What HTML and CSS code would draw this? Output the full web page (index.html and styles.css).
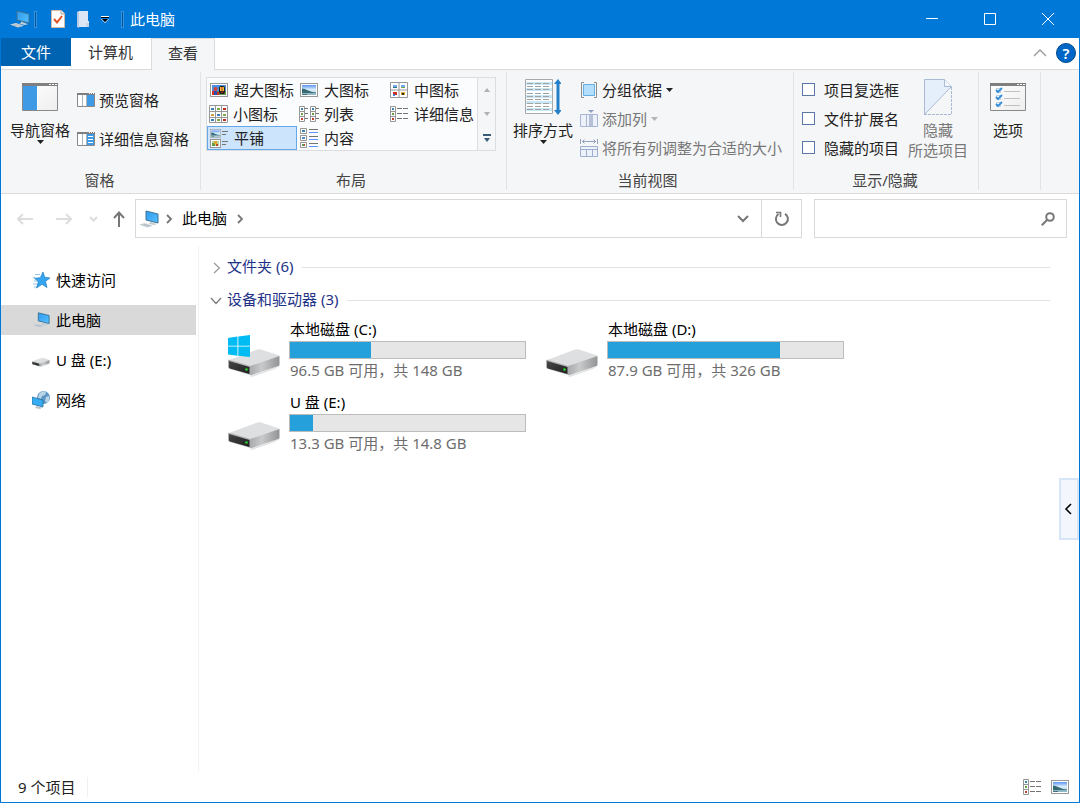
FILE: index.html
```html
<!DOCTYPE html>
<html lang="zh-CN">
<head>
<meta charset="utf-8">
<title>此电脑</title>
<link rel="stylesheet" href="styles.css">
</head>
<body>
<svg class="defs" aria-hidden="true">
  <defs>
    <linearGradient id="sky" x1="0" y1="0" x2="0" y2="1"><stop offset="0" stop-color="#5b93f5"/><stop offset=".45" stop-color="#d9ecfa"/><stop offset="1" stop-color="#a9cfe0"/></linearGradient>
    <linearGradient id="screen" x1="0" y1="0" x2="1" y2="1"><stop offset="0" stop-color="#2f9bee"/><stop offset="1" stop-color="#55c0ff"/></linearGradient>
    <linearGradient id="side" x1="0" y1="0" x2="1" y2="0"><stop offset="0" stop-color="#a9abac"/><stop offset=".4" stop-color="#c9cacb"/><stop offset="1" stop-color="#919394"/></linearGradient>
    <linearGradient id="face" x1="0" y1="0" x2="1" y2="1"><stop offset="0" stop-color="#474747"/><stop offset="1" stop-color="#1f1f1f"/></linearGradient>
    <linearGradient id="paper" x1="0" y1="0" x2="1" y2="1"><stop offset="0" stop-color="#ffffff"/><stop offset="1" stop-color="#eeeeee"/></linearGradient>
  </defs>
  <symbol id="pc" viewBox="0 0 20 18">
    <path d="M7 1 19 4v9L7 10z" fill="url(#screen)" stroke="#3b7294"/>
    <path d="M11 11.500v1.500l-2 .8 6 1.200 3-.8-3-1.200z" fill="#c3cdd4"/>
    <path d="M0 14.500 6 13l8 2.800L8 17.500z" fill="#d4dbe0"/><path d="M2 14.600 10 16.700M4.500 14 12 16" stroke="#9eabb4" stroke-width=".6"/>
  </symbol>
  <symbol id="hdd" viewBox="0 0 53 28">
    <path d="M22 27 51 17l2-1-6 4-23 8z" fill="#e3e3e3"/>
    <path d="M1 11 29 0.500Q31 0 33 .5L50 6q2 .6 1 1.500L22 18z" fill="#dedfe1"/>
    <path d="M22 17 51.500 7v8.500q0 1-1 1.500L24 26q-1 .5-2 0z" fill="url(#side)"/>
    <path d="M0 11.500q0-1 1-.8L21 16.500q1.500.5 1.500 2V26L2 20q-2-.5-2-2z" fill="#b1b2b3"/>
    <path d="M1 12 21.500 18v7L2 19.500q-1-.2-1-1.300z" fill="url(#face)"/>
    <circle cx="18.500" cy="20.500" r="1.300" fill="#25d72b"/>
  </symbol>
  <symbol id="pic" viewBox="0 0 18 14">
    <rect x=".5" y=".5" width="17" height="13" fill="#fff" stroke="#979797"/>
    <rect x="2" y="2" width="14" height="10" fill="url(#sky)"/>
    <path d="M2 5.500q3 0 5 1.500l5 2 4 .5v1H2z" fill="#376a72"/><path d="M2 10h14v2H2z" fill="#8fb7c7"/><path d="M2 11h5v1H2z" fill="#46707a"/>
  </symbol>
  <symbol id="xpic" viewBox="0 0 18 14">
    <rect x=".5" y=".5" width="17" height="13" fill="#fff" stroke="#979797"/>
    <rect x="2" y="2" width="14" height="10" fill="#4d8ee5"/><path d="M2 8h14v4H2z" fill="#62964b"/>
    <rect x="9" y="3" width="6" height="8" rx="2" fill="#251b19"/><path d="M10 4h4v4h-4z" fill="#e7c131"/><path d="M11.500 4h1v6h-1z" fill="#c8392b"/>
    <circle cx="5.500" cy="6" r="2" fill="#d44135"/><path d="M2 8h2v4H2zM7 9h2v3H7z" fill="#d92d23"/><path d="M4 8h3v4H4z" fill="#2a4eb1"/>
  </symbol>
  <symbol id="flower" viewBox="0 0 11 9">
    <rect x=".5" y=".5" width="10" height="8" fill="#fff" stroke="#979797"/>
    <path d="M2 2h7v5H2z" fill="#b9d4a0"/><path d="M2 4h3v3H2z" fill="#5f9a3c"/><path d="M4 2h3v3H4z" fill="#e0a92e"/><path d="M6 5h2v2H6z" fill="#c9432b"/>
  </symbol>
  <symbol id="medium" viewBox="0 0 18 16">
    <path d="M.5.5h17v15H.5zM9 .5v15M.5 8h17" fill="#fff" stroke="#979797"/>
    <path d="M3 3h4v2H3zM11 3h4v2h-4z" fill="#6fa9ef"/><path d="M3 5h4v1H3z" fill="#2f7772"/><path d="M11 5h4v1h-4z" fill="#7aa84c"/>
    <path d="M3 10h4v3H3z" fill="#cf2c21"/><path d="M11 10h4v3h-4z" fill="#d9a82b"/><path d="M12 11h2v2h-2z" fill="#3d2723"/><path d="M3 12h2v2H3z" fill="#417bd2"/>
  </symbol>
  <symbol id="small" viewBox="0 0 19 18">
    <path d="M.5.5h18v17H.5zM6.500.5v17M12.500.5v17M.5 6.500h18M.5 12.500h18" fill="#fff" stroke="#979797"/>
    <path d="M2 3h3v2H2zM8 9h3v2H8zM2 14h3v2H2z" fill="#387fba"/><path d="M8 3h3v2H8zM14 9h3v2h-3zM8 14h3v2H8z" fill="#7da846"/><path d="M14 3h3v2h-3zM14 14h3v2h-3z" fill="#c92a1f"/><path d="M2 9h3v2H2z" fill="#cba038"/>
  </symbol>
  <symbol id="strip" viewBox="0 0 6 16">
    <path d="M.5.5h5v15h-5zM.5 5.500h5M.5 10.500h5" fill="#fff" stroke="#979797"/>
    <path d="M2 2h2v2H2z" fill="#3b86b5"/><path d="M2 7h2v2H2z" fill="#6d9d40"/><path d="M2 12h2v2H2z" fill="#c74028"/>
  </symbol>
  <symbol id="list" viewBox="0 0 20 16"><use href="#strip" width="6" height="16"/><use href="#strip" x="11" width="6" height="16"/><path d="M6 2.500h3M6 7.500h3M6 12.500h3M17 2.500h3M17 7.500h3M17 12.500h3" stroke="#747474"/></symbol>
  <symbol id="details" viewBox="0 0 18 16"><use href="#strip" width="6" height="16"/><path d="M7 2.500h5m1 0h5M7 7.500h5m1 0h5M7 12.500h5m1 0h5" stroke="#747474"/></symbol>
  <symbol id="tiles" viewBox="0 0 18 19"><use href="#pic" width="11" height="9"/><use href="#flower" y="10" width="11" height="9"/><path d="M12 2.500h6M12 5.500h4M12 12.500h6M12 15.500h4" stroke="#747474"/></symbol>
  <symbol id="content" viewBox="0 0 18 20">
    <path d="M.5.500h6v5h-6zM.5 7.500h6v5h-6zM.5 14.500h6v5h-6z" fill="#fff" stroke="#979797"/>
    <path d="M2 2h3v2H2z" fill="#3b86b5"/><path d="M2 9h3v2H2z" fill="#4c8ac9"/><path d="M2 16h2v2H2z" fill="#5c9a4c"/><path d="M4 16h1v2H4z" fill="#c74028"/>
    <path d="M9 1.500h9M9 8.500h9M9 15.500h9" stroke="#747474"/><path d="M9 4.500h9M9 11.500h9M9 18.500h9" stroke="#5d94ff"/></symbol>
  <symbol id="down" viewBox="0 0 7 4"><path d="M0 0h7L3.500 4z" fill="currentColor"/></symbol>
  <symbol id="chev" viewBox="0 0 8 10"><path d="m2 1 4 4-4 4" fill="none" stroke="currentColor" stroke-width="1.800"/></symbol>
</svg>

<div class="window">
  <header class="titlebar">
    <svg class="app-icon" viewBox="0 0 20 18"><use href="#pc"/></svg>
    <span class="divider"></span>
    <div class="quick">
      <button aria-label="属性"><svg width="14" height="18" viewBox="0 0 14 18"><path d="M.5.5h10l3 3v14H.5z" fill="#fff" stroke="#d1b8a2"/><path d="M10 .5v3.500h3.500" fill="#eee" stroke="#aaa"/><path d="m3 9 3 3.500L11 6" fill="none" stroke="#e35322" stroke-width="2"/></svg></button>
      <button aria-label="新建文件夹"><svg width="12" height="17" viewBox="0 0 12 17"><path d="M0 1 2 0v17l-2-1z" fill="#b9cbe4"/><path d="M2 0h9v10h1v6H2z" fill="#dce6f5"/><path d="M9 12h3v4H9z" fill="#c7d5ea"/></svg></button>
      <button aria-label="自定义快速访问工具栏"><svg width="8" height="7" viewBox="0 0 8 7"><path d="M0 0h8v1H0zM0 3h1l3 3 3-3h1L4 7z" fill="#fff"/><path d="M0 1h8v1H0zM1 3h6L4 6z" fill="#000"/></svg></button>
    </div>
    <span class="divider"></span>
    <h1 class="title">此电脑</h1>
    <div class="caption">
      <button aria-label="最小化"><svg width="12" height="12" viewBox="0 0 12 12"><path d="M0 5.500h12"/></svg></button>
      <button aria-label="最大化"><svg width="12" height="12" viewBox="0 0 12 12"><path d="M.5.5h11v11H.5z"/></svg></button>
      <button aria-label="关闭"><svg width="12" height="12" viewBox="0 0 12 12"><path d="m0 0 12 12M12 0 0 12"/></svg></button>
    </div>
  </header>

  <nav class="tabs">
    <button class="tab tab-file">文件</button>
    <button class="tab">计算机</button>
    <button class="tab tab-active">查看</button>
    <div class="tab-tools">
      <button aria-label="最小化功能区"><svg width="14" height="8" viewBox="0 0 14 8"><path d="m1 7 6-6 6 6" fill="none" stroke="#9a9a9a" stroke-width="1.300"/></svg></button>
      <button class="help" aria-label="帮助">?</button>
    </div>
  </nav>

  <section class="ribbon">
    <div class="group group-panes">
      <div class="group-body">
        <button class="big">
          <span class="big-icon"><svg width="36" height="28" viewBox="0 0 36 28"><path d="M.5.5h35v27H.5z" fill="url(#paper)" stroke="#898989"/><path d="M0 0h36v3H0z" fill="#7f7f7f"/><path d="M27 1.500h2m1 0h2m1 0h2" stroke="#fff"/><path d="M1 3h14v24H1z" fill="#3e9ae5"/><path d="M15 3h1v24h-1z" fill="#fff"/></svg></span>
          <span>导航窗格</span>
          <svg class="drop" viewBox="0 0 7 4"><use href="#down"/></svg>
        </button>
        <div class="stack stack-two">
          <button class="small"><svg width="18" height="14" viewBox="0 0 18 14"><path d="M.5.5h17v13H.5z" fill="#fff" stroke="#898989"/><path d="M0 0h18v2H0z" fill="#7f7f7f"/><path d="M12 .5h1m1 0h1m1 0h1" stroke="#fff"/><path d="M5.500 2v11M9.500 2v11" stroke="#b4b4b4"/><path d="M10 2h7v11h-7z" fill="#3e9ae5"/></svg>预览窗格</button>
          <button class="small"><svg width="18" height="14" viewBox="0 0 18 14"><path d="M.5.5h17v13H.5z" fill="#fff" stroke="#898989"/><path d="M0 0h18v2H0z" fill="#7f7f7f"/><path d="M12 .5h1m1 0h1m1 0h1" stroke="#fff"/><path d="M5.500 2v11M9.500 2v11" stroke="#b4b4b4"/><path d="M10 2h7v11h-7z" fill="#3e9ae5"/><path d="M11 4.500h5M11 7.500h5M11 10.500h5" stroke="#fff"/></svg>详细信息窗格</button>
        </div>
      </div>
      <h2 class="group-label">窗格</h2>
    </div>

    <div class="group group-layout">
      <div class="group-body">
        <div class="gallery">
          <div class="gallery-items">
            <button class="view"><svg width="18" height="14"><use href="#xpic"/></svg>超大图标</button>
            <button class="view"><svg width="18" height="14"><use href="#pic"/></svg>大图标</button>
            <button class="view"><svg width="18" height="16"><use href="#medium"/></svg>中图标</button>
            <button class="view view-wide"><svg width="19" height="18"><use href="#small"/></svg>小图标</button>
            <button class="view view-wide"><svg width="20" height="16"><use href="#list"/></svg>列表</button>
            <button class="view"><svg width="18" height="16"><use href="#details"/></svg>详细信息</button>
            <button class="view view-on" aria-pressed="true"><svg width="18" height="19"><use href="#tiles"/></svg>平铺</button>
            <button class="view"><svg width="18" height="20"><use href="#content"/></svg>内容</button>
          </div>
          <div class="gallery-scroll">
            <button aria-label="向上"><svg width="6" height="4" viewBox="0 0 6 4"><path d="M0 4h6L3 0z" fill="#adb1b6"/></svg></button>
            <button aria-label="向下"><svg width="6" height="4" viewBox="0 0 6 4"><path d="M0 0h6L3 4z" fill="#adb1b6"/></svg></button>
            <button aria-label="更多"><svg width="8" height="8" viewBox="0 0 8 8"><path d="M0 0h8v2H0zM1 4h6L4 8z" fill="#385a78"/></svg></button>
          </div>
        </div>
      </div>
      <h2 class="group-label">布局</h2>
    </div>

    <div class="group group-current">
      <div class="group-body">
        <button class="big">
          <span class="big-icon"><svg width="36" height="36" viewBox="0 0 36 36"><path d="M.5.5h27v34H.5z" fill="#fff" stroke="#a9a9a9"/><path d="M1 3h26v3H1zM1 9h26v3H1zM1 16h26v3H1zM1 22h26v3H1zM1 29h26v3H1z" fill="#c9e8f5"/><path d="M2 4.500h24M2 7.500h24M2 10.500h24M2 14.500h24M2 17.500h24M2 20.500h24M2 24.500h24M2 27.500h24M2 30.500h24" stroke="#a2a2a2" stroke-dasharray="6 2"/><path d="M33 3v30" stroke="#2680c9" stroke-width="3"/><path d="m29 5 4-5 3 4v1zM29 31l4 5 3-4v-1z" fill="#2680c9"/></svg></span>
          <span>排序方式</span>
          <svg class="drop" viewBox="0 0 7 4"><use href="#down"/></svg>
        </button>
        <div class="stack">
          <button class="small"><svg width="18" height="16" viewBox="0 0 18 16"><path d="M4 .5H1.500v15H4M14 .5h2.500v15H14" fill="none" stroke="#8c8c8c"/><path d="M3.500 2.500h11v11h-11z" fill="#b3dffc" stroke="#64aee5"/></svg>分组依据<svg class="drop" viewBox="0 0 7 4"><use href="#down"/></svg></button>
          <button class="small" disabled><svg width="18" height="17" viewBox="0 0 18 17"><path d="M.5 4.500h17v12H.5zM6.500 4.500v12M12.500 4.500v12" fill="#edf1fa" stroke="#a9b6d3"/><path d="M9 5h4v11H9z" fill="#b5c0d7"/><path d="M8 0h6l-3 3z" fill="#8ba0c2"/></svg>添加列<svg class="drop" viewBox="0 0 7 4"><use href="#down"/></svg></button>
          <button class="small" disabled><svg width="18" height="18" viewBox="0 0 18 18"><path d="M.5 0v5M17.500 0v5M2 2.500h14M4.500.5l-2 2 2 2M13.500.5l2 2-2 2" fill="none" stroke="#91a3c0"/><path d="M.5 7.500h17v10H.5zM.5 10.500h17M6.500 10.500v7M12.500 10.500v7" fill="#edf1fa" stroke="#9fafd0"/></svg>将所有列调整为合适的大小</button>
        </div>
      </div>
      <h2 class="group-label">当前视图</h2>
    </div>

    <div class="group group-show">
      <div class="group-body">
        <div class="stack">
          <label class="check"><input type="checkbox">项目复选框</label>
          <label class="check"><input type="checkbox">文件扩展名</label>
          <label class="check"><input type="checkbox">隐藏的项目</label>
        </div>
        <button class="big" disabled>
          <span class="big-icon"><svg width="28" height="36" viewBox="0 0 28 36"><path d="M.5.5h20l7 7L.5 35z" fill="#e5effb"/><path d="M.5 35.500V.5h20l7 7L.5 35.500" fill="none" stroke="#a9bad2"/><path d="M20.500.5v7h7" fill="#f3f8fe" stroke="#a9bad2"/><path d="M27.500 8v27.500H0" fill="none" stroke="#a9bad2" stroke-dasharray="3 1"/></svg></span>
          <span>隐藏<br>所选项目</span>
        </button>
      </div>
      <h2 class="group-label">显示/隐藏</h2>
    </div>

    <div class="group group-options">
      <div class="group-body">
        <button class="big">
          <span class="big-icon"><svg width="36" height="28" viewBox="0 0 36 28"><path d="M.5.5h35v27H.5z" fill="url(#paper)" stroke="#898989"/><path d="M0 0h36v3H0z" fill="#7f7f7f"/><path d="M27 1.500h2m1 0h2m1 0h2" stroke="#fff"/><path d="M6.500 5.500h4v4h-4zM6.500 12.500h4v4h-4zM6.500 19.500h4v4h-4z" fill="#fff" stroke="#bcd0e3"/><path d="m6 7 2 2 4-4M6 14l2 2 4-4M6 21l2 2 4-4" fill="none" stroke="#318edb" stroke-width="1.800"/><path d="M14 8.500h16M14 15.500h16M14 22.500h16" stroke="#c0c0c0"/></svg></span>
          <span>选项</span>
        </button>
      </div>
    </div>
  </section>

  <div class="navbar">
    <div class="history">
      <button aria-label="后退" disabled><svg width="16" height="12" viewBox="0 0 16 12"><path d="M16 6H1m5-5L1 6l5 5"/></svg></button>
      <button aria-label="前进" disabled><svg width="16" height="12" viewBox="0 0 16 12"><path d="M0 6h15m-5-5 5 5-5 5"/></svg></button>
      <button class="recent" aria-label="最近浏览的位置" disabled><svg width="9" height="6" viewBox="0 0 9 6"><path d="m1 1 3.500 3.500L8 1"/></svg></button>
      <button class="up" aria-label="向上一级"><svg width="12" height="16" viewBox="0 0 12 16"><path d="M6 16V1.500M1 7l5-5.500L11 7"/></svg></button>
    </div>
    <div class="address">
      <svg class="app-icon" viewBox="0 0 20 18"><use href="#pc"/></svg>
      <svg class="crumb-sep" viewBox="0 0 8 10"><use href="#chev"/></svg>
      <button class="crumb">此电脑</button>
      <svg class="crumb-sep" viewBox="0 0 8 10"><use href="#chev"/></svg>
      <button class="address-drop" aria-label="以前的位置"><svg width="12" height="8" viewBox="0 0 12 8"><path d="m1 1 5 5 5-5" fill="none" stroke="#777" stroke-width="2"/></svg></button>
      <button class="refresh" aria-label="刷新"><svg width="16" height="16" viewBox="0 0 16 16"><path d="M11 2.800A6 6 0 1 1 4.500 3" fill="none" stroke="#777" stroke-width="2"/><path d="M2 1.500h4.500V6" fill="none" stroke="#777" stroke-width="1.600"/></svg></button>
    </div>
    <div class="search">
      <input type="text" aria-label="搜索此电脑">
      <svg width="14" height="14" viewBox="0 0 14 14"><circle cx="9" cy="5" r="3.800" fill="none" stroke="#777" stroke-width="2"/><path d="M6.500 7.500.8 13.200" stroke="#777" stroke-width="2"/></svg>
    </div>
  </div>

  <div class="content">
    <nav class="tree">
      <a class="node" href="#quick"><svg class="node-icon" viewBox="0 0 18 16"><path d="m11 0 1.700 5.200L18 6l-4.500 3.300L15 15.500l-5-3.200L4.500 16l1.800-6.200L2.500 6.300l5.800-.6z" fill="#35a5ef" stroke="#1d7cc4" stroke-width=".7"/><path d="M3 2.500h5M1 5.500h2M2 9h3M1 12h4M2 15h2" stroke="#7fb8e2" stroke-width=".8"/></svg>快速访问</a>
      <a class="node node-on" href="#pc-root"><svg class="node-icon" viewBox="0 0 20 18"><use href="#pc"/></svg>此电脑</a>
      <a class="node" href="#usb"><svg class="node-icon" viewBox="0 0 53 42"><use href="#hdd" y="14" width="53" height="28"/></svg>U 盘 (E:)</a>
      <a class="node" href="#network"><svg class="node-icon" viewBox="0 0 18 18"><circle cx="11.500" cy="6.500" r="6.500" fill="#5c96c4"/><path d="M7 3q3-4 7-2l-1 3-3 1-1 3-3-1zM14 6l3-1q1 4-2 7l-2-2z" fill="#b9d5e6"/><path d="M0 6 11 9v7L0 13z" fill="#35acf3" stroke="#286f9e" stroke-width=".8"/><path d="m5 15 5 1.500-2 1.500-5-1z" fill="#b8c2c9"/></svg>网络</a>
    </nav>
    <main class="files">
      <section>
        <h2 class="section-head"><svg class="toggle toggle-closed" viewBox="0 0 8 12"><path d="m1 1 5.500 5L1 11"/></svg><span class="section-name">文件夹 (6)</span><span class="rule"></span></h2>
      </section>
      <section>
        <h2 class="section-head"><svg class="toggle" viewBox="0 0 12 8"><path d="m1 1 5 5.500L11 1"/></svg><span class="section-name">设备和驱动器 (3)</span><span class="rule"></span></h2>
        <div class="drives">
          <a class="drive" href="#c">
            <svg class="drive-icon" viewBox="0 0 53 42"><use href="#hdd" y="14" width="53" height="28"/><path d="M0 3 9.500 1.500v9.200H0zM10.300 1.400 22 0v10.700H10.300zM0 11.500h9.500v9.200L0 19.500zM10.300 11.500H22V22l-11.700-1.300z" fill="#00bcf2"/></svg>
            <span class="drive-info"><span class="name">本地磁盘 (C:)</span><span class="bar"><span class="fill" style="width:34.6%"></span></span><span class="free">96.5 GB 可用，共 148 GB</span></span>
          </a>
          <a class="drive" href="#d">
            <svg class="drive-icon" viewBox="0 0 53 42"><use href="#hdd" y="14" width="53" height="28"/></svg>
            <span class="drive-info"><span class="name">本地磁盘 (D:)</span><span class="bar"><span class="fill" style="width:73.1%"></span></span><span class="free">87.9 GB 可用，共 326 GB</span></span>
          </a>
          <a class="drive" href="#e">
            <svg class="drive-icon" viewBox="0 0 53 42"><use href="#hdd" y="14" width="53" height="28"/></svg>
            <span class="drive-info"><span class="name">U 盘 (E:)</span><span class="bar"><span class="fill" style="width:9.8%"></span></span><span class="free">13.3 GB 可用，共 14.8 GB</span></span>
          </a>
        </div>
      </section>
    </main>
  </div>

  <footer class="status">
    <span class="count">9 个项目</span>
    <div class="status-views">
      <button aria-label="详细信息视图"><svg width="18" height="16"><use href="#details"/></svg></button>
      <button aria-label="大图标视图"><svg width="18" height="14"><use href="#pic"/></svg></button>
    </div>
  </footer>

  <button class="handle" aria-label="展开侧栏"><svg width="8" height="12" viewBox="0 0 8 12"><path d="M7 1 2 6l5 5" fill="none" stroke="#000" stroke-width="1.600"/></svg></button>
</div>
</body>
</html>
```
FILE: styles.css
```css
* { box-sizing: border-box; }

body {
  margin: 0;
  background: #fff;
  color: #000;
  font: 15px/20px "Noto Sans", "Noto Sans CJK SC", sans-serif;
}

button {
  margin: 0;
  padding: 0;
  border: 0;
  background: none;
  color: inherit;
  font: inherit;
}

h1, h2 { margin: 0; font-size: 15px; font-weight: 400; }
a { color: inherit; text-decoration: none; }
svg { display: block; flex: none; }

.defs { position: absolute; width: 0; height: 0; }

.window {
  position: relative;
  display: flex;
  flex-direction: column;
  min-height: 100vh;
  border: 1px solid #0078d7;
  border-top: 0;
}

/* Title bar */
.titlebar {
  display: flex;
  align-items: center;
  height: 38px;
  padding-left: 9px;
  background: #0078d7;
  color: #fff;
}
.app-icon { width: 20px; height: 18px; }
.divider {
  width: 3px;
  height: 17px;
  margin-left: 4px;
  border: 1px solid #3b91dc;
  background: #00569b;
}
.quick { display: flex; align-items: center; gap: 12px; margin: 0 8px 0 14px; }
.title { padding-left: 6px; }
.caption { display: flex; align-self: stretch; margin-left: auto; padding-right: 2px; }
.caption button { display: grid; place-items: center; width: 58px; }
.caption path { fill: none; stroke: #fff; }

/* Tabs */
.tabs {
  display: flex;
  align-items: flex-start;
  height: 32px;
  border-bottom: 1px solid #dadbdc;
}
.tab { height: 28px; padding: 0 18px 0 17px; color: #333; }
.tab-file { width: 70px; padding: 0; background: #0063b1; color: #fff; }
.tab-active {
  height: 32px;
  padding: 0 16px 4px;
  border: 1px solid #dadbdc;
  border-bottom: 0;
  background: #f5f6f7;
}
.tab-tools { display: flex; align-items: center; gap: 9px; height: 30px; margin-left: auto; padding-right: 3px; }
.help {
  width: 20px;
  height: 20px;
  border: 1px solid #00488a;
  border-radius: 50%;
  background: #0067c8;
  color: #fff;
  font-weight: 600;
  line-height: 18px;
}

/* Ribbon */
.ribbon {
  display: flex;
  height: 124px;
  padding: 2px 0 3px;
  border-bottom: 1px solid #dadbdc;
  background: #f5f6f7;
  color: #222;
}
.group {
  display: flex;
  flex-direction: column;
  justify-content: space-between;
  border-right: 1px solid #e2e3e4;
}
.group-body { display: flex; align-items: flex-start; padding-top: 3px; }
.group-label { color: #444; text-align: center; }
.group-panes { padding: 0 11px 0 9px; }
.group-panes .group-body { gap: 7px; }
.group-layout { padding: 0 10px 0 5px; }
.group-current { padding: 0 11px 0 6px; }
.group-current .group-body { gap: 7px; }
.group-show { padding: 0 10px 0 8px; }
.group-show .group-body { gap: 9px; }
.group-options { padding: 0 14px 0 11px; }

.big { display: flex; flex-direction: column; align-items: center; }
.big-icon { display: grid; place-items: center; height: 44px; margin-bottom: 1px; }
.big:disabled, .small:disabled { color: #777; }
.drop { width: 7px; height: 4px; }
.small:disabled .drop { color: #b5b5b5; }
.stack { display: grid; grid-auto-rows: 29px; }
.stack-two { grid-auto-rows: 39px; padding-top: 5px; }
.small, .check { display: flex; align-items: center; gap: 4px; white-space: nowrap; }
.check { gap: 9px; }
.check input {
  appearance: none;
  width: 13px;
  height: 13px;
  margin: 0;
  border: 1px solid #5b76a8;
  background: #fff;
}

.gallery { display: flex; margin-top: 2px; border: 1px solid #dcdddf; background: #fbfcfe; }
.gallery-items { display: grid; grid-template-columns: repeat(3, 90px); grid-auto-rows: 24px; }
.view { display: flex; align-items: center; gap: 6px; padding-left: 3px; white-space: nowrap; }
.view-wide { gap: 5px; padding-left: 2px; }
.view-on { padding-left: 2px; border: 1px solid #66a7e8; background: #cce4fc; }
.gallery-scroll {
  display: grid;
  grid-template-rows: repeat(3, 24px);
  width: 18px;
  border-left: 1px solid #dcdddf;
  background: #f5f6f7;
}
.gallery-scroll button { display: grid; place-items: center; }

/* Address row */
.navbar { display: flex; gap: 12px; padding: 5px 12px 8px 16px; }
.history { display: flex; align-items: center; gap: 23px; margin-right: -2px; }
.history path { fill: none; stroke: #ddd; stroke-width: 2; }
.history .recent { margin-left: -6px; }
.history .up { margin-left: -8px; }
.history .up path { stroke: #777; }
.address {
  display: flex;
  flex: 1;
  align-items: center;
  gap: 6px;
  height: 39px;
  padding-left: 3px;
  border: 1px solid #d9d9d9;
}
.crumb-sep { width: 8px; height: 10px; color: #777; }
.crumb { padding: 0 3px 1px; }
.address-drop { margin-left: auto; margin-right: 6px; }
.refresh { display: grid; place-items: center; align-self: stretch; width: 40px; border-left: 1px solid #d9d9d9; }
.search {
  display: flex;
  flex: 0 1 253px;
  min-width: 0;
  align-items: center;
  padding: 0 11px;
  border: 1px solid #d9d9d9;
}
.search input { flex: 1; width: 100%; min-width: 0; padding: 0; border: 0; outline: 0; background: none; font: inherit; }

/* Content */
.content { display: flex; flex: 1; }
.tree {
  display: flex;
  flex-direction: column;
  gap: 10px;
  width: 198px;
  padding: 19px 2px 0 0;
  border-right: 1px solid #f3f3f3;
}
.node { display: flex; align-items: center; gap: 6px; height: 30px; padding-left: 31px; }
.node-on { background: #d9d9d9; }
.node-icon { width: 18px; height: 18px; }

.files { flex: 1; padding: 5px 29px 0 11px; }
.section-head { display: flex; align-items: center; height: 33px; color: #1e3287; }
.section-name { padding-bottom: 3px; }
.toggle { width: 12px; height: 8px; margin-right: 5px; fill: none; stroke: #777; stroke-width: 1.2; }
.toggle-closed { width: 8px; height: 12px; margin: 0 6px 0 3px; stroke: #999; }
.rule { flex: 1; height: 1px; margin-left: 9px; background: #e2e2e2; }
.drives { display: grid; grid-template-columns: repeat(auto-fill, 318px); padding: 2px 0 0 18px; }
.drive { display: flex; gap: 8px; height: 73px; }
.drive-icon { width: 53px; height: 42px; margin-top: 16px; }
.drive-info { display: flex; flex-direction: column; width: 237px; }
.name, .free { padding-left: 1px; }
.bar { height: 18px; margin: 2px 0 1px; border: 1px solid #bcbcbc; background: #e6e6e6; }
.fill { display: block; height: 100%; background: #26a0da; }
.free { color: #6d6d6d; }

/* Status bar */
.status { display: flex; align-items: center; justify-content: space-between; height: 30px; padding: 0 10px 0 17px; }
.count { padding-right: 12px; border-right: 1px solid #f0f0f0; color: #222; }
.status-views { display: flex; align-items: center; gap: 10px; }

/* Side panel handle */
.handle {
  position: absolute;
  top: 478px;
  right: 0;
  display: grid;
  place-items: center;
  width: 20px;
  height: 62px;
  padding-right: 2px;
  border: 2px solid #d6e5f7;
  background: #f3f7fd;
}
```
